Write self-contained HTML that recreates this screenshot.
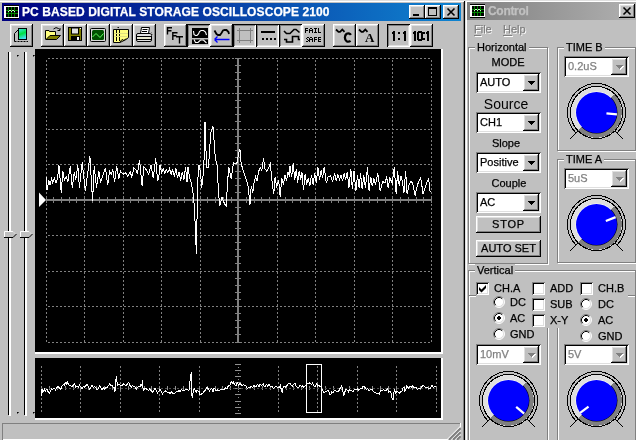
<!DOCTYPE html><html><head><meta charset="utf-8"><style>
*{box-sizing:border-box}
html,body{margin:0;padding:0}
body{width:636px;height:440px;overflow:hidden;position:relative;background:#c0c0c0;font-family:"Liberation Sans",sans-serif;font-size:11px;color:#000}
.a{position:absolute}
.rz{background:#c0c0c0;box-shadow:inset -1px -1px #000,inset 1px 1px #fff,inset -2px -2px #808080,inset 2px 2px #dfdfdf}
.pr{background:#c0c0c0;box-shadow:inset 1px 1px #000,inset -1px -1px #fff,inset 2px 2px #808080,inset -2px -2px #dfdfdf}
.pk{background-color:#dfdfdf;background-image:linear-gradient(45deg,#c0c0c0 25%,transparent 25%,transparent 75%,#c0c0c0 75%),linear-gradient(45deg,#c0c0c0 25%,transparent 25%,transparent 75%,#c0c0c0 75%);background-size:2px 2px;background-position:0 0,1px 1px;box-shadow:inset 1px 1px #000,inset -1px -1px #fff,inset 2px 2px #808080,inset -2px -2px #dfdfdf}
.sk{background:#fff;box-shadow:inset 1px 1px #808080,inset -1px -1px #fff,inset 2px 2px #000,inset -2px -2px #dfdfdf}
.et{border:1px solid #808080;box-shadow:inset 1px 1px #fff,1px 1px #fff}
.gl{position:absolute;background:#c0c0c0;padding:0 2px;line-height:12px;white-space:nowrap;will-change:transform;-webkit-text-stroke:0.25px #000}
.t{position:absolute;white-space:nowrap;line-height:1;will-change:transform;-webkit-text-stroke:0.25px currentColor}
svg{position:absolute;overflow:visible}

</style></head><body>
<div class="a" style="left:0;top:0;width:465px;height:440px;background:#c0c0c0;box-shadow:inset 0 1px #dfdfdf,inset -1px 0 #000,inset 0 2px #fff,inset -2px 0 #808080"></div>
<div class="a" style="left:2px;top:3px;width:459px;height:18px;background:linear-gradient(to right,#000080,#1084d0)"></div>
<svg style="left:4px;top:5px" width="15" height="14" viewBox="0 -1 15 14" shape-rendering="crispEdges"><rect x="0" y="-1" width="15" height="14" fill="#000"/><rect x="0" y="0" width="15" height="12" fill="#fff"/><rect x="2" y="1" width="12" height="10" fill="#000"/><rect x="4" y="1" width="1" height="10" fill="#008000"/><rect x="7" y="1" width="1" height="10" fill="#008000"/><rect x="10" y="1" width="1" height="10" fill="#008000"/><rect x="2" y="4" width="12" height="1" fill="#008000"/><rect x="2" y="7" width="12" height="1" fill="#008000"/><rect x="4" y="5" width="1" height="1" fill="#c0ffc0"/><rect x="7" y="5" width="1" height="1" fill="#c0ffc0"/><rect x="10" y="5" width="1" height="1" fill="#c0ffc0"/><rect x="5" y="4" width="1" height="1" fill="#c0ffc0"/><rect x="6" y="4" width="1" height="1" fill="#c0ffc0"/><rect x="8" y="4" width="1" height="1" fill="#c0ffc0"/><rect x="9" y="4" width="1" height="1" fill="#c0ffc0"/></svg>
<div class="t" style="left:22px;top:6px;font-weight:bold;font-size:12px;color:#fff;letter-spacing:0.1px">PC BASED DIGITAL STORAGE OSCILLOSCOPE 2100</div>
<div class="a rz" style="left:409px;top:5px;width:16px;height:14px"></div><div class="a" style="left:413px;top:14px;width:6px;height:2px;background:#000"></div>
<div class="a rz" style="left:425px;top:5px;width:16px;height:14px"></div><div class="a" style="left:428px;top:7px;width:9px;height:9px;border:1px solid #000;border-top-width:2px"></div>
<div class="a rz" style="left:443px;top:5px;width:16px;height:14px"></div><svg style="left:443px;top:5px" width="16" height="14" viewBox="0 0 16 14"><path d="M4.5 3.5 L11.5 10.5 M11.5 3.5 L4.5 10.5" stroke="#000" stroke-width="1.6"/></svg>
<div class="a rz" style="left:10px;top:24px;width:23px;height:23px"></div>
<svg style="left:10px;top:24px" width="23" height="23" viewBox="0 0 23 23"><defs><linearGradient id="g1" x1="0" y1="0" x2="0.3" y2="1"><stop offset="0" stop-color="#40e8f0"/><stop offset="0.55" stop-color="#00e040"/><stop offset="1" stop-color="#40e0f0"/></linearGradient></defs><rect x="8.5" y="4.5" width="8" height="11" fill="url(#g1)" stroke="#000"/><path d="M4.5 17.5 V9.5 L8.5 5.5" stroke="#000" fill="none"/><path d="M4.5 17.5 H18" stroke="#000" stroke-dasharray="2 1" fill="none"/></svg>
<div class="a rz" style="left:41px;top:24px;width:23px;height:23px"></div>
<svg style="left:41px;top:24px" width="23" height="23" viewBox="0 0 23 23"><path d="M4.5 15.5 V6.5 H8 L8.5 7.5 H14.5 V11.5" fill="#ffff80" stroke="#000"/><path d="M5 15.5 L9 11.5 H19.5 L15.5 15.5 Z" fill="#808000" stroke="#000"/><path d="M12.5 5 Q15 2.5 17.5 4.5 L18.5 5.5" stroke="#000" fill="none"/><path d="M16.5 6.5 H19 V4" stroke="#000" fill="none"/></svg>
<div class="a rz" style="left:64px;top:24px;width:23px;height:23px"></div>
<svg style="left:64px;top:24px" width="23" height="23" viewBox="0 0 23 23"><rect x="4.5" y="3.5" width="13" height="13" fill="#808000" stroke="#000"/><rect x="7.5" y="4" width="7" height="6" fill="#e0e0e0" stroke="#000"/><rect x="7" y="12" width="9" height="5" fill="#000"/><rect x="13" y="13" width="2" height="3" fill="#fff"/><rect x="16" y="4" width="1" height="1" fill="#fff"/></svg>
<div class="a rz" style="left:87px;top:24px;width:23px;height:23px"></div>
<svg style="left:87px;top:24px" width="23" height="23" viewBox="0 0 23 23"><rect x="3.5" y="4.5" width="15" height="13" rx="1" fill="#d8d8d8" stroke="#000"/><rect x="5" y="6" width="12" height="10" rx="1.5" fill="#005000"/><path d="M5.5 13 L9 9.5 L13 13.5 L16.5 9.5" stroke="#60ff60" fill="none"/></svg>
<div class="a rz" style="left:110px;top:24px;width:23px;height:23px"></div>
<svg style="left:110px;top:24px" width="23" height="23" viewBox="0 0 23 23"><path d="M3.5 5.5 H18.5 V13.5 L16 15.5 L13 17 L10 18.5 H3.5 Z" fill="#ffff80" stroke="#000"/><path d="M6.5 5 V17 M9.5 5 V17" stroke="#000" stroke-width="1"/><path d="M4 9.5 H18 M4 12.5 H17" stroke="#e0e080" stroke-width="1"/><path d="M7.5 4 Q8 2.5 9 4" stroke="#000" fill="none"/><path d="M10 18 L12 15.5 L14 16.5 L16 14.5" stroke="#000" fill="none"/></svg>
<div class="a rz" style="left:133px;top:24px;width:23px;height:23px"></div>
<svg style="left:133px;top:24px" width="23" height="23" viewBox="0 0 23 23"><path d="M7.5 9.5 L8.5 3.5 H16.5 L15.5 9.5 Z" fill="#fff" stroke="#000"/><path d="M9.5 5.5 H14.5 M9 7.5 H14" stroke="#000"/><rect x="3.5" y="9.5" width="15" height="8" rx="1.5" fill="#e0e0e0" stroke="#000"/><path d="M4 12.5 H18 M4 15.5 H18" stroke="#000"/><path d="M5 14 H17" stroke="#f0f0c0"/><path d="M17 10 L19 8 M18 12 L20 10" stroke="#606060" stroke-dasharray="1 1"/></svg>
<div class="a rz" style="left:164px;top:24px;width:23px;height:23px"></div>
<svg style="left:164px;top:24px" width="23" height="23" viewBox="0 0 23 23"><path d="M3.5 3 V10.5 M3 3.8 H8 M3 6.8 H7.5 M8.8 8 V16 M8.3 8.8 H13.5 M8.3 11.8 H12.5 M12 12.8 H19 M15.5 12.5 V19.5" stroke="#000" stroke-width="1.4" fill="none"/></svg>
<div class="a pr" style="left:187px;top:24px;width:23px;height:23px"></div>
<svg style="left:187px;top:24px" width="23" height="23" viewBox="0 0 23 23"><rect x="5" y="4" width="16" height="16" fill="#000"/><rect x="5" y="14" width="16" height="1.5" fill="#c0c0c0"/><path d="M6.5 7 L7 10.5 L8.5 11.5 H10 L11.5 10 L12.5 7.5 L14 6.5 H16.5 L18.5 8 L19.5 11" stroke="#fff" fill="none" stroke-width="1.1"/><path d="M7 15.5 L8.5 18.5 H11 L13.5 16 H16.5 L19.5 19" stroke="#fff" fill="none" stroke-width="1.1"/></svg>
<div class="a rz" style="left:210px;top:24px;width:23px;height:23px"></div>
<svg style="left:210px;top:24px" width="23" height="23" viewBox="0 0 23 23"><path d="M4.5 6.5 L6.5 10 L8 11 H10 L11.5 9 L13 6.5 L14.5 6 H16.5 L18.5 8 L19 10" stroke="#000" stroke-width="1.8" fill="none"/><path d="M4.5 15.5 H19.5 M4.5 15.5 L7.5 12.5 M4.5 15.5 L7.5 18.5" stroke="#0000ff" stroke-width="1.3" fill="none"/></svg>
<div class="a pr" style="left:233px;top:24px;width:23px;height:23px"></div>
<svg style="left:233px;top:24px" width="23" height="23" viewBox="0 0 23 23"><path d="M6.5 4 V19 M17.5 4 V19 M4 6.5 H20 M4 16.5 H20" stroke="#808080" stroke-width="1"/></svg>
<div class="a pr" style="left:256px;top:24px;width:23px;height:23px"></div>
<svg style="left:256px;top:24px" width="23" height="23" viewBox="0 0 23 23"><rect x="5" y="7" width="14" height="2" fill="#000"/><rect x="6" y="14" width="2" height="2" fill="#000"/><rect x="10" y="14" width="2" height="2" fill="#000"/><rect x="14" y="14" width="2" height="2" fill="#000"/><rect x="18" y="14" width="2" height="2" fill="#000"/></svg>
<div class="a pr" style="left:279px;top:24px;width:23px;height:23px"></div>
<svg style="left:279px;top:24px" width="23" height="23" viewBox="0 0 23 23"><path d="M5 7 L7.5 9.5 H11 L15 5.5 H17 L20.5 8.5" stroke="#000" stroke-width="1.6" fill="none"/><path d="M5 15.5 H7.5 V18 H13.5 V12.5 H19.5 V15.5 H21" stroke="#000" stroke-width="1.6" fill="none"/></svg>
<div class="a rz" style="left:302px;top:24px;width:23px;height:23px"></div>
<svg style="left:0px;top:0px" width="636" height="50" viewBox="0 0 636 50" shape-rendering="crispEdges"><g fill="#000"><rect x="305" y="28" width="1" height="1"/><rect x="306" y="28" width="1" height="1"/><rect x="307" y="28" width="1" height="1"/><rect x="305" y="29" width="1" height="1"/><rect x="305" y="30" width="1" height="1"/><rect x="306" y="30" width="1" height="1"/><rect x="307" y="30" width="1" height="1"/><rect x="305" y="31" width="1" height="1"/><rect x="305" y="32" width="1" height="1"/><rect x="310" y="28" width="1" height="1"/><rect x="311" y="28" width="1" height="1"/><rect x="309" y="29" width="1" height="1"/><rect x="312" y="29" width="1" height="1"/><rect x="309" y="30" width="1" height="1"/><rect x="310" y="30" width="1" height="1"/><rect x="311" y="30" width="1" height="1"/><rect x="312" y="30" width="1" height="1"/><rect x="309" y="31" width="1" height="1"/><rect x="312" y="31" width="1" height="1"/><rect x="309" y="32" width="1" height="1"/><rect x="312" y="32" width="1" height="1"/><rect x="314" y="28" width="1" height="1"/><rect x="315" y="28" width="1" height="1"/><rect x="316" y="28" width="1" height="1"/><rect x="315" y="29" width="1" height="1"/><rect x="315" y="30" width="1" height="1"/><rect x="315" y="31" width="1" height="1"/><rect x="314" y="32" width="1" height="1"/><rect x="315" y="32" width="1" height="1"/><rect x="316" y="32" width="1" height="1"/><rect x="318" y="28" width="1" height="1"/><rect x="318" y="29" width="1" height="1"/><rect x="318" y="30" width="1" height="1"/><rect x="318" y="31" width="1" height="1"/><rect x="318" y="32" width="1" height="1"/><rect x="319" y="32" width="1" height="1"/><rect x="320" y="32" width="1" height="1"/><rect x="307" y="37" width="1" height="1"/><rect x="308" y="37" width="1" height="1"/><rect x="306" y="38" width="1" height="1"/><rect x="307" y="39" width="1" height="1"/><rect x="308" y="40" width="1" height="1"/><rect x="306" y="41" width="1" height="1"/><rect x="307" y="41" width="1" height="1"/><rect x="310" y="37" width="1" height="1"/><rect x="311" y="37" width="1" height="1"/><rect x="309" y="38" width="1" height="1"/><rect x="312" y="38" width="1" height="1"/><rect x="309" y="39" width="1" height="1"/><rect x="310" y="39" width="1" height="1"/><rect x="311" y="39" width="1" height="1"/><rect x="312" y="39" width="1" height="1"/><rect x="309" y="40" width="1" height="1"/><rect x="312" y="40" width="1" height="1"/><rect x="309" y="41" width="1" height="1"/><rect x="312" y="41" width="1" height="1"/><rect x="314" y="37" width="1" height="1"/><rect x="315" y="37" width="1" height="1"/><rect x="316" y="37" width="1" height="1"/><rect x="314" y="38" width="1" height="1"/><rect x="314" y="39" width="1" height="1"/><rect x="315" y="39" width="1" height="1"/><rect x="316" y="39" width="1" height="1"/><rect x="314" y="40" width="1" height="1"/><rect x="314" y="41" width="1" height="1"/><rect x="318" y="37" width="1" height="1"/><rect x="319" y="37" width="1" height="1"/><rect x="320" y="37" width="1" height="1"/><rect x="318" y="38" width="1" height="1"/><rect x="318" y="39" width="1" height="1"/><rect x="319" y="39" width="1" height="1"/><rect x="320" y="39" width="1" height="1"/><rect x="318" y="40" width="1" height="1"/><rect x="318" y="41" width="1" height="1"/><rect x="319" y="41" width="1" height="1"/><rect x="320" y="41" width="1" height="1"/></g></svg>
<div class="a rz" style="left:333px;top:24px;width:23px;height:23px"></div>
<svg style="left:0px;top:0px" width="636" height="50" viewBox="0 0 636 50"><path d="M336 29.5 L338.5 31.8 L340 31.8 L342.3 29.5 L344.5 31.8" stroke="#000" stroke-width="1.8" fill="none"/><path d="M350.8 35 L350.3 34.2 Q348.5 32.8 346.6 33.8 Q344.9 35 344.9 37.6 Q344.9 40.3 346.6 41.3 Q348.6 42.3 350.6 40.8" stroke="#000" stroke-width="2.3" fill="none"/></svg>
<div class="a rz" style="left:356px;top:24px;width:23px;height:23px"></div>
<svg style="left:0px;top:0px" width="636" height="50" viewBox="0 0 636 50"><path d="M359 29.5 L361.5 31.8 L363 31.8 L365.3 29.5 L367.5 31.8" stroke="#000" stroke-width="1.8" fill="none"/><text x="365" y="41.8" font-family="Liberation Serif" font-weight="bold" font-size="13" fill="#000">A</text></svg>
<div class="a pr" style="left:387px;top:24px;width:23px;height:23px"></div>
<svg style="left:0px;top:0px" width="636" height="50" viewBox="0 0 636 50" shape-rendering="crispEdges"><g fill="#000"><rect x="392" y="32" width="1" height="2"/><rect x="393" y="31" width="2" height="10"/><rect x="398" y="32" width="2" height="2"/><rect x="398" y="38" width="2" height="2"/><rect x="403" y="32" width="1" height="2"/><rect x="404" y="31" width="2" height="10"/></g></svg>
<div class="a rz" style="left:410px;top:24px;width:23px;height:23px"></div>
<svg style="left:0px;top:0px" width="636" height="50" viewBox="0 0 636 50" shape-rendering="crispEdges"><g fill="#000"><rect x="413" y="32" width="1" height="2"/><rect x="414" y="31" width="2" height="10"/><path d="M417 32 h1 v-1 h4 v1 h1 v8 h-1 v1 h-4 v-1 h-1 Z M419 33 v6 h2 v-6 Z" fill-rule="evenodd"/><rect x="423" y="32" width="2" height="2"/><rect x="423" y="38" width="2" height="2"/><rect x="426" y="32" width="1" height="2"/><rect x="427" y="31" width="2" height="10"/></g></svg>
<div class="a" style="left:8px;top:52px;width:1px;height:363px;background:#000"></div>
<div class="a" style="left:9px;top:52px;width:2px;height:364px;background:#fff"></div>
<svg style="left:4px;top:230px" width="14" height="9" viewBox="0 0 14 9"><path d="M0 1 H9 L12 4 L9 7 H0 Z" fill="#c0c0c0"/><path d="M0.5 7 V1.5 H9" stroke="#fff" fill="none"/><path d="M9 1.5 L11.5 4" stroke="#dfdfdf" fill="none"/><path d="M0 7.5 H9 L12.5 4" stroke="#000" fill="none"/></svg>
<div class="a" style="left:24px;top:52px;width:1px;height:363px;background:#000"></div>
<div class="a" style="left:25px;top:52px;width:2px;height:364px;background:#fff"></div>
<svg style="left:20px;top:230px" width="14" height="9" viewBox="0 0 14 9"><path d="M0 1 H9 L12 4 L9 7 H0 Z" fill="#c0c0c0"/><path d="M0.5 7 V1.5 H9" stroke="#fff" fill="none"/><path d="M9 1.5 L11.5 4" stroke="#dfdfdf" fill="none"/><path d="M0 7.5 H9 L12.5 4" stroke="#000" fill="none"/></svg>
<div class="a" style="left:17px;top:55px;width:1px;height:1px;background:#000;box-shadow:1px 0 #404040,0 1px #606060"></div>
<div class="a" style="left:17px;top:412px;width:1px;height:1px;background:#000;box-shadow:1px 0 #404040,0 1px #606060"></div>
<div class="a" style="left:33px;top:55px;width:1px;height:1px;background:#000;box-shadow:1px 0 #404040,0 1px #606060"></div>
<div class="a" style="left:33px;top:412px;width:1px;height:1px;background:#000;box-shadow:1px 0 #404040,0 1px #606060"></div>
<svg style="left:0;top:0" width="636" height="440" viewBox="0 0 636 440"><rect x="35" y="49" width="406" height="303" fill="#000"/><rect x="441" y="49" width="2" height="305" fill="#fff"/><rect x="35" y="352" width="408" height="2" fill="#fff"/><rect x="35" y="358" width="406" height="60" fill="#000"/><rect x="441" y="358" width="2" height="62" fill="#fff"/><rect x="35" y="418" width="408" height="2" fill="#fff"/><path d="M46.5 60 V343 M84.5 60 V343 M123.5 60 V343 M161.5 60 V343 M200.5 60 V343 M277.5 60 V343 M315.5 60 V343 M354.5 60 V343 M392.5 60 V343 M431.5 60 V343 M48 58.5 H432 M48 93.5 H432 M48 129.5 H432 M48 164.5 H432 M48 235.5 H432 M48 271.5 H432 M48 306.5 H432 M48 342.5 H432" stroke="#808080" stroke-width="1" stroke-dasharray="2 2" fill="none" shape-rendering="crispEdges"/><path d="M46 199 H432 V201 H46 Z M237 58 H239 V343 H237 Z M46 197 h1 v6 h-1 Z M53 197 h1 v6 h-1 Z M61 197 h1 v6 h-1 Z M69 197 h1 v6 h-1 Z M76 197 h1 v6 h-1 Z M84 197 h1 v6 h-1 Z M92 197 h1 v6 h-1 Z M99 197 h1 v6 h-1 Z M107 197 h1 v6 h-1 Z M115 197 h1 v6 h-1 Z M123 197 h1 v6 h-1 Z M130 197 h1 v6 h-1 Z M138 197 h1 v6 h-1 Z M146 197 h1 v6 h-1 Z M153 197 h1 v6 h-1 Z M161 197 h1 v6 h-1 Z M169 197 h1 v6 h-1 Z M177 197 h1 v6 h-1 Z M184 197 h1 v6 h-1 Z M192 197 h1 v6 h-1 Z M200 197 h1 v6 h-1 Z M207 197 h1 v6 h-1 Z M215 197 h1 v6 h-1 Z M223 197 h1 v6 h-1 Z M231 197 h1 v6 h-1 Z M238 197 h1 v6 h-1 Z M246 197 h1 v6 h-1 Z M254 197 h1 v6 h-1 Z M261 197 h1 v6 h-1 Z M269 197 h1 v6 h-1 Z M277 197 h1 v6 h-1 Z M285 197 h1 v6 h-1 Z M292 197 h1 v6 h-1 Z M300 197 h1 v6 h-1 Z M308 197 h1 v6 h-1 Z M315 197 h1 v6 h-1 Z M323 197 h1 v6 h-1 Z M331 197 h1 v6 h-1 Z M338 197 h1 v6 h-1 Z M346 197 h1 v6 h-1 Z M354 197 h1 v6 h-1 Z M362 197 h1 v6 h-1 Z M369 197 h1 v6 h-1 Z M377 197 h1 v6 h-1 Z M385 197 h1 v6 h-1 Z M392 197 h1 v6 h-1 Z M400 197 h1 v6 h-1 Z M408 197 h1 v6 h-1 Z M416 197 h1 v6 h-1 Z M423 197 h1 v6 h-1 Z M431 197 h1 v6 h-1 Z M235 58 h6 v1 h-6 Z M235 65 h6 v1 h-6 Z M235 72 h6 v1 h-6 Z M235 79 h6 v1 h-6 Z M235 86 h6 v1 h-6 Z M235 93 h6 v1 h-6 Z M235 100 h6 v1 h-6 Z M235 107 h6 v1 h-6 Z M235 114 h6 v1 h-6 Z M235 121 h6 v1 h-6 Z M235 129 h6 v1 h-6 Z M235 136 h6 v1 h-6 Z M235 143 h6 v1 h-6 Z M235 150 h6 v1 h-6 Z M235 157 h6 v1 h-6 Z M235 164 h6 v1 h-6 Z M235 171 h6 v1 h-6 Z M235 178 h6 v1 h-6 Z M235 185 h6 v1 h-6 Z M235 192 h6 v1 h-6 Z M235 200 h6 v1 h-6 Z M235 207 h6 v1 h-6 Z M235 214 h6 v1 h-6 Z M235 221 h6 v1 h-6 Z M235 228 h6 v1 h-6 Z M235 235 h6 v1 h-6 Z M235 242 h6 v1 h-6 Z M235 249 h6 v1 h-6 Z M235 256 h6 v1 h-6 Z M235 263 h6 v1 h-6 Z M235 271 h6 v1 h-6 Z M235 278 h6 v1 h-6 Z M235 285 h6 v1 h-6 Z M235 292 h6 v1 h-6 Z M235 299 h6 v1 h-6 Z M235 306 h6 v1 h-6 Z M235 313 h6 v1 h-6 Z M235 320 h6 v1 h-6 Z M235 327 h6 v1 h-6 Z M235 334 h6 v1 h-6 Z M235 342 h6 v1 h-6 Z" fill="#808080" shape-rendering="crispEdges"/><path d="M39 192.5 L46 200 L39 207 Z" fill="#fff"/><polyline points="46.4,177.4 47.0,190.0 48.8,180.6 50.0,184.6 51.6,179.0 52.8,183.0 54.3,178.0 56.0,183.0 57.5,179.0 59.0,165.5 61.2,192.5 62.8,171.0 64.4,179.8 66.3,176.6 67.9,181.4 70.3,166.3 72.3,187.8 74.3,171.8 75.8,179.8 77.8,165.5 79.4,187.8 82.2,162.3 85.4,191.0 89.9,156.0 92.6,201.3 94.2,166.3 96.5,187.8 98.9,171.0 100.5,183.0 102.4,176.6 105.6,167.9 107.6,185.4 109.6,171.0 111.5,174.2 112.7,168.7 114.6,182.2 116.7,166.3 118.8,179.0 120.4,171.0 123.1,174.2 125.5,172.6 127.9,176.6 130.3,171.8 131.8,177.4 133.8,167.9 135.8,169.5 137.4,174.2 139.5,159.9 142.2,186.2 143.8,167.0 146.2,169.5 148.6,174.2 151.0,165.5 153.3,178.2 155.7,158.3 157.6,181.4 159.2,174.2 160.0,165.5 161.6,172.6 163.2,168.7 164.8,173.4 166.4,169.5 167.9,172.6 169.5,168.7 171.1,174.2 172.7,169.5 174.3,176.6 175.9,167.9 177.5,178.2 179.1,171.8 180.7,180.6 182.3,171.8 183.9,179.8 185.5,167.1 187.0,182.2 188.0,167.3 189.8,178.6 191.4,183.2 193.7,196.8 195.5,230.0 196.3,253.5 197.1,215.0 197.6,183.2 198.9,165.0 200.5,171.8 201.6,187.7 202.8,178.6 203.9,165.0 205.0,121.8 206.6,167.3 208.5,167.3 210.7,133.2 213.0,126.4 215.3,158.2 217.0,165.0 218.7,194.5 219.8,205.9 222.0,196.8 224.4,203.6 226.2,205.9 227.8,178.6 228.9,167.3 231.2,178.6 233.5,162.7 235.7,163.9 237.2,162.3 238.8,152.7 240.0,149.6 241.2,163.9 243.6,171.8 245.9,178.2 248.0,186.2 249.1,195.7 249.9,205.3 251.2,186.2 252.8,192.5 253.9,183.0 255.5,176.6 257.1,181.4 258.7,171.0 260.3,167.9 261.9,170.3 263.5,158.3 265.0,168.7 266.6,171.0 268.2,168.7 270.3,163.9 272.2,183.0 273.8,194.1 275.1,176.6 276.7,187.8 278.6,179.8 280.2,196.5 281.8,178.2 283.4,184.6 285.0,175.0 286.5,181.4 288.1,171.8 289.7,176.6 290.0,166.3 291.6,177.4 293.2,163.1 294.8,179.8 296.4,168.7 297.6,183.0 299.2,171.0 300.8,179.8 301.9,171.8 303.5,190.2 305.1,174.2 306.7,184.6 308.3,178.2 309.9,186.2 311.5,175.0 313.1,184.6 314.7,173.4 316.3,183.0 317.9,167.1 319.5,179.8 321.1,170.3 322.6,178.2 324.2,167.1 326.3,183.0 328.2,176.6 330.6,175.8 332.7,181.4 334.6,173.4 336.2,181.4 337.8,174.2 339.4,179.8 341.0,175.0 342.5,181.4 344.1,173.4 345.7,179.8 347.3,171.8 348.9,187.8 350.8,168.7 352.4,189.4 354.0,171.0 355.9,191.0 357.5,175.0 359.1,187.8 360.6,173.4 362.2,189.4 363.8,175.0 365.4,187.8 367.5,167.1 369.1,191.0 370.7,176.6 372.3,186.2 373.9,178.2 375.5,184.6 377.8,173.4 380.2,191.0 382.6,181.4 385.0,183.0 386.6,176.6 388.2,187.8 389.8,178.2 392.2,183.0 394.2,167.1 396.2,194.1 397.6,171.0 399.2,186.2 400.8,175.8 402.4,181.4 404.0,192.5 405.6,171.0 407.1,194.1 409.1,184.6 411.1,181.4 412.7,183.0 415.1,195.7 417.5,184.6 420.7,177.4 423.1,194.1 425.5,186.2 428.6,178.2 430.2,192.5" stroke="#fff" stroke-width="1" fill="none" stroke-linejoin="miter" shape-rendering="crispEdges"/><path d="M41.5 366 V412 M80.5 366 V412 M120.5 366 V412 M159.5 366 V412 M199.5 366 V412 M278.5 366 V412 M317.5 366 V412 M357.5 366 V412 M396.5 366 V412 M436.5 366 V412" stroke="#808080" stroke-width="1" stroke-dasharray="2 2" fill="none" shape-rendering="crispEdges"/><path d="M235 364 h6 v1 h-6 Z M238 367 h1 v1 h-1 Z M235 370 h6 v1 h-6 Z M238 373 h1 v1 h-1 Z M235 376 h6 v1 h-6 Z M238 379 h1 v1 h-1 Z M235 382 h6 v1 h-6 Z M238 385 h1 v1 h-1 Z M235 388 h6 v1 h-6 Z M238 391 h1 v1 h-1 Z M235 394 h6 v1 h-6 Z M238 397 h1 v1 h-1 Z M235 401 h6 v1 h-6 Z M238 404 h1 v1 h-1 Z M235 407 h6 v1 h-6 Z M238 410 h1 v1 h-1 Z M235 413 h6 v1 h-6 Z M41 386 h1 v4 h-1 Z M49 386 h1 v4 h-1 Z M57 386 h1 v4 h-1 Z M65 386 h1 v4 h-1 Z M73 386 h1 v4 h-1 Z M80 386 h1 v4 h-1 Z M88 386 h1 v4 h-1 Z M96 386 h1 v4 h-1 Z M104 386 h1 v4 h-1 Z M112 386 h1 v4 h-1 Z M120 386 h1 v4 h-1 Z M128 386 h1 v4 h-1 Z M136 386 h1 v4 h-1 Z M144 386 h1 v4 h-1 Z M151 386 h1 v4 h-1 Z M159 386 h1 v4 h-1 Z M167 386 h1 v4 h-1 Z M175 386 h1 v4 h-1 Z M183 386 h1 v4 h-1 Z M191 386 h1 v4 h-1 Z M199 386 h1 v4 h-1 Z M207 386 h1 v4 h-1 Z M215 386 h1 v4 h-1 Z M222 386 h1 v4 h-1 Z M230 386 h1 v4 h-1 Z M238 386 h1 v4 h-1 Z M246 386 h1 v4 h-1 Z M254 386 h1 v4 h-1 Z M262 386 h1 v4 h-1 Z M270 386 h1 v4 h-1 Z M278 386 h1 v4 h-1 Z M286 386 h1 v4 h-1 Z M293 386 h1 v4 h-1 Z M301 386 h1 v4 h-1 Z M309 386 h1 v4 h-1 Z M317 386 h1 v4 h-1 Z M325 386 h1 v4 h-1 Z M333 386 h1 v4 h-1 Z M341 386 h1 v4 h-1 Z M349 386 h1 v4 h-1 Z M357 386 h1 v4 h-1 Z M364 386 h1 v4 h-1 Z M372 386 h1 v4 h-1 Z M380 386 h1 v4 h-1 Z M388 386 h1 v4 h-1 Z M396 386 h1 v4 h-1 Z M404 386 h1 v4 h-1 Z M412 386 h1 v4 h-1 Z M420 386 h1 v4 h-1 Z M428 386 h1 v4 h-1 Z M436 386 h1 v4 h-1 Z" fill="#909090" shape-rendering="crispEdges"/><path d="M41 388.5 H437" stroke="#505050" stroke-dasharray="2 2" shape-rendering="crispEdges"/><polyline points="41.1,388.9 41.5,392.4 41.8,395.8 42.1,391.4 42.5,389.0 43.1,391.2 43.7,391.4 44.6,389.1 45.5,390.8 46.8,389.1 48.0,391.4 49.3,393.4 50.6,391.4 51.5,388.4 52.5,389.5 53.5,388.9 54.4,388.3 55.6,390.0 56.9,387.6 58.1,386.0 59.4,388.3 60.6,389.4 61.9,386.4 63.2,384.8 64.4,385.1 65.3,382.5 66.3,383.9 67.2,381.9 68.2,383.9 69.5,385.9 70.7,385.8 72.0,386.5 73.2,385.1 74.5,384.1 75.7,387.0 77.0,386.3 78.3,387.6 79.5,385.3 80.8,387.0 82.0,388.7 83.3,386.4 84.5,387.1 85.8,385.8 87.0,384.1 88.3,386.4 89.5,389.0 90.8,387.6 92.0,385.5 93.3,387.4 94.6,386.5 95.9,387.6 97.2,390.0 98.4,388.3 99.7,386.1 100.9,388.0 102.2,389.8 103.4,387.6 104.7,389.3 105.9,387.0 107.2,387.4 108.4,385.8 109.7,383.8 111.0,385.8 112.2,385.7 113.5,387.6 114.2,387.5 115.0,391.4 115.6,385.5 116.2,375.7 116.8,379.4 117.3,385.1 118.5,384.8 119.8,384.5 121.0,385.8 122.3,385.1 123.5,383.8 124.8,384.5 126.0,386.2 127.3,383.9 128.6,382.5 129.8,385.1 131.1,387.5 132.4,385.8 133.7,386.4 134.9,387.0 136.2,389.3 137.4,387.6 138.7,386.3 139.9,387.0 140.9,384.1 141.8,385.1 142.1,384.6 142.4,380.1 142.9,387.1 143.4,390.2 144.8,388.5 146.2,388.9 147.4,389.5 148.7,390.2 149.9,388.5 151.2,390.8 152.4,392.5 153.7,390.2 154.9,388.2 156.2,390.2 157.5,392.8 158.8,391.4 160.1,389.4 161.3,391.4 162.6,393.7 163.8,392.0 165.1,390.7 166.3,391.4 167.6,392.7 168.8,392.0 170.1,393.7 171.3,391.4 172.6,393.6 173.9,393.9 175.2,392.6 176.4,391.4 177.7,391.8 178.9,390.2 180.2,391.9 181.4,389.5 182.7,390.9 183.9,390.2 185.2,389.9 186.4,389.5 187.7,389.9 189.0,390.2 190.1,380.4 191.2,372.5 191.6,384.1 192.1,397.7 193.1,392.6 194.0,389.5 194.7,388.4 195.3,391.2 196.2,392.6 197.2,390.0 198.1,390.9 199.1,391.8 200.1,394.8 201.0,393.7 201.9,394.4 202.9,393.0 203.9,391.8 204.8,390.5 205.8,389.9 206.7,387.4 207.6,388.0 208.6,388.6 209.6,391.0 210.5,389.3 211.8,388.6 213.1,391.8 214.1,388.2 215.0,388.6 216.1,391.1 217.2,389.5 218.3,391.0 219.4,390.5 220.7,389.2 222.0,389.9 223.2,389.6 224.5,389.3 225.4,388.0 226.4,388.6 227.4,388.0 228.4,385.4 229.4,385.8 230.3,384.2 231.2,381.9 232.2,383.5 233.4,382.1 234.7,384.8 236.0,385.9 237.3,382.9 238.6,385.2 239.8,383.5 240.8,384.4 241.7,385.4 242.6,385.1 243.6,384.8 244.9,385.5 246.2,386.1 247.4,388.8 248.7,387.4 250.0,387.8 251.3,386.1 252.6,387.8 253.8,385.4 255.1,386.8 256.3,386.1 257.6,384.4 258.9,386.7 260.1,384.0 261.4,385.4 262.4,384.8 263.3,384.2 264.2,386.4 265.2,386.7 266.5,384.4 267.8,386.1 268.9,384.1 270.0,386.1 271.0,386.1 272.0,386.1 273.3,388.3 274.5,387.5 275.8,386.7 277.1,387.0 278.4,387.4 279.4,387.4 280.3,385.4 281.2,389.2 282.2,393.1 283.1,387.6 284.1,386.1 285.1,387.3 286.2,386.5 287.4,385.0 288.5,383.5 289.8,383.1 291.1,384.8 292.4,386.5 293.6,384.2 294.9,383.1 296.2,386.1 297.4,387.8 298.7,387.4 300.0,384.8 301.3,386.1 302.6,385.8 303.8,387.4 305.1,386.1 306.4,384.8 307.6,383.1 308.9,383.5 309.9,382.8 310.8,384.0 311.8,384.1 312.7,382.3 313.4,385.2 314.0,386.1 314.9,386.8 315.9,385.4 316.9,383.8 317.8,386.1 318.9,385.1 319.9,387.1 321.0,386.1 321.9,389.3 322.9,390.5 324.1,393.1 325.4,391.8 326.7,391.1 328.0,390.5 328.9,391.4 329.9,394.4 330.9,394.1 331.8,391.8 333.1,393.1 334.3,390.5 335.6,390.9 336.9,391.2 338.1,391.5 339.4,389.9 340.5,387.6 341.7,385.4 342.8,391.5 343.9,395.6 344.9,391.8 345.8,389.9 347.1,389.9 348.3,391.8 349.1,389.4 350.0,391.0 351.5,390.4 353.0,391.8 354.4,389.6 355.9,389.5 357.4,388.9 358.9,390.3 360.4,388.6 361.8,388.8 363.3,386.1 364.8,387.3 366.2,389.1 367.7,388.8 369.2,391.1 370.7,389.5 372.1,389.6 373.6,391.8 375.1,392.5 376.6,393.2 378.1,393.6 379.5,394.0 380.6,390.5 381.8,391.0 383.2,389.6 384.7,390.3 386.2,390.6 387.7,388.8 388.8,391.9 389.9,391.0 390.6,392.5 391.4,394.0 392.2,398.9 393.1,399.9 393.7,396.4 394.3,388.8 395.1,391.0 395.8,393.2 396.9,391.5 398.0,391.8 399.5,393.4 401.0,391.0 402.1,391.1 403.2,387.3 404.0,387.1 404.9,391.0 405.9,389.4 406.9,385.8 408.4,388.2 409.8,386.6 411.3,387.2 412.8,385.8 414.2,387.6 415.7,387.3 417.2,389.1 418.7,388.8 420.1,389.1 421.6,387.3 423.1,385.0 424.6,386.6 426.1,388.0 427.5,387.3 429.0,388.6 430.5,388.0 432.0,385.6 433.5,387.3 434.9,386.0 436.4,386.6" stroke="#fff" stroke-width="1" fill="none" shape-rendering="crispEdges"/><rect x="306.5" y="364.5" width="15" height="48" stroke="#fff" fill="none"/></svg>
<div class="a" style="left:2px;top:423px;width:458px;height:1px;background:#808080"></div>
<div class="a" style="left:2px;top:423px;width:1px;height:17px;background:#808080"></div>
<div class="a" style="left:3px;top:439px;width:445px;height:1px;background:#fff"></div>
<div class="a" style="left:460px;top:423px;width:1px;height:4px;background:#fff"></div>
<svg style="left:446px;top:424px" width="16" height="16" viewBox="0 0 16 16"><path d="M1.5 15.5 L14.5 2.5 M5.5 15.5 L14.5 6.5 M9.5 15.5 L14.5 10.5" stroke="#fff" stroke-width="1.1"/><path d="M3 15.8 L14.6 4.2 M7 15.8 L14.6 8.2 M11 15.8 L14.6 12.2" stroke="#808080" stroke-width="2"/></svg>
<div class="a" style="left:465px;top:0;width:200px;height:440px;background:#c0c0c0;box-shadow:inset 1px 1px #dfdfdf,inset 2px 2px #fff"></div>
<div class="a" style="left:467px;top:2px;width:169px;height:18px;background:linear-gradient(to right,#808080,#b0b0b0)"></div>
<svg style="left:470px;top:4px" width="15" height="14" viewBox="0 -1 15 14" shape-rendering="crispEdges"><rect x="0" y="-1" width="15" height="14" fill="#000"/><rect x="0" y="0" width="15" height="12" fill="#fff"/><rect x="2" y="1" width="12" height="10" fill="#000"/><rect x="4" y="1" width="1" height="10" fill="#008000"/><rect x="7" y="1" width="1" height="10" fill="#008000"/><rect x="10" y="1" width="1" height="10" fill="#008000"/><rect x="2" y="4" width="12" height="1" fill="#008000"/><rect x="2" y="7" width="12" height="1" fill="#008000"/><rect x="4" y="5" width="1" height="1" fill="#c0ffc0"/><rect x="7" y="5" width="1" height="1" fill="#c0ffc0"/><rect x="10" y="5" width="1" height="1" fill="#c0ffc0"/><rect x="5" y="4" width="1" height="1" fill="#c0ffc0"/><rect x="6" y="4" width="1" height="1" fill="#c0ffc0"/><rect x="8" y="4" width="1" height="1" fill="#c0ffc0"/><rect x="9" y="4" width="1" height="1" fill="#c0ffc0"/></svg>
<div class="t" style="left:488px;top:5px;font-weight:bold;font-size:12px;letter-spacing:-0.3px;color:#c0c0c0">Control</div>
<div class="a rz" style="left:619px;top:4px;width:16px;height:14px"></div><svg style="left:619px;top:4px" width="16" height="14" viewBox="0 0 16 14"><path d="M4.5 3.5 L11.5 10.5 M11.5 3.5 L4.5 10.5" stroke="#000" stroke-width="1.6"/></svg>
<div class="t" style="left:474px;top:24px;font-size:11px;color:#808080;text-shadow:1px 1px #fff">File</div>
<div class="a" style="left:474px;top:35px;width:7px;height:1px;background:#808080;box-shadow:1px 1px #fff"></div>
<div class="t" style="left:503px;top:24px;font-size:11px;color:#808080;text-shadow:1px 1px #fff">Help</div>
<div class="a" style="left:503px;top:35px;width:9px;height:1px;background:#808080;box-shadow:1px 1px #fff"></div>
<div class="a et" style="left:468px;top:47px;width:80px;height:217px"></div><div class="gl" style="left:475px;top:41px;font-size:11px">Horizontal</div>
<div class="a et" style="left:557px;top:47px;width:79px;height:104px"></div><div class="gl" style="left:564px;top:41px;font-size:11px">TIME B</div>
<div class="a et" style="left:557px;top:159px;width:79px;height:104px"></div><div class="gl" style="left:564px;top:153px;font-size:11px">TIME A</div>
<div class="a et" style="left:468px;top:270px;width:168px;height:180px"></div><div class="gl" style="left:475px;top:264px;font-size:11px">Vertical</div>
<div class="a et" style="left:468px;top:295px;width:80px;height:150px"></div>
<div class="a et" style="left:557px;top:295px;width:79px;height:150px"></div>
<div class="t" style="left:468px;width:80px;text-align:center;top:57px;font-size:11px">MODE</div>
<div class="t" style="left:466px;width:80px;text-align:center;top:97px;font-size:14px;-webkit-text-stroke:0">Source</div>
<div class="t" style="left:466px;width:80px;text-align:center;top:138px;font-size:11px">Slope</div>
<div class="t" style="left:469px;width:80px;text-align:center;top:178px;font-size:11px">Couple</div>
<div class="a sk" style="left:476px;top:72px;width:65px;height:21px"></div><div class="t" style="left:480px;top:77px;font-size:11px;color:#000">AUTO</div><div class="a rz" style="left:523px;top:74px;width:16px;height:17px"></div><svg style="left:523px;top:74px" width="16" height="17" viewBox="0 0 16 17" shape-rendering="crispEdges"><g fill="#000"><rect x="5" y="7" width="7" height="1"/><rect x="6" y="8" width="5" height="1"/><rect x="7" y="9" width="3" height="1"/><rect x="8" y="10" width="1" height="1"/></g></svg>
<div class="a sk" style="left:476px;top:112px;width:65px;height:21px"></div><div class="t" style="left:480px;top:117px;font-size:11px;color:#000">CH1</div><div class="a rz" style="left:523px;top:114px;width:16px;height:17px"></div><svg style="left:523px;top:114px" width="16" height="17" viewBox="0 0 16 17" shape-rendering="crispEdges"><g fill="#000"><rect x="5" y="7" width="7" height="1"/><rect x="6" y="8" width="5" height="1"/><rect x="7" y="9" width="3" height="1"/><rect x="8" y="10" width="1" height="1"/></g></svg>
<div class="a sk" style="left:476px;top:152px;width:65px;height:21px"></div><div class="t" style="left:480px;top:157px;font-size:11px;color:#000">Positive</div><div class="a rz" style="left:523px;top:154px;width:16px;height:17px"></div><svg style="left:523px;top:154px" width="16" height="17" viewBox="0 0 16 17" shape-rendering="crispEdges"><g fill="#000"><rect x="5" y="7" width="7" height="1"/><rect x="6" y="8" width="5" height="1"/><rect x="7" y="9" width="3" height="1"/><rect x="8" y="10" width="1" height="1"/></g></svg>
<div class="a sk" style="left:476px;top:192px;width:65px;height:21px"></div><div class="t" style="left:480px;top:197px;font-size:11px;color:#000">AC</div><div class="a rz" style="left:523px;top:194px;width:16px;height:17px"></div><svg style="left:523px;top:194px" width="16" height="17" viewBox="0 0 16 17" shape-rendering="crispEdges"><g fill="#000"><rect x="5" y="7" width="7" height="1"/><rect x="6" y="8" width="5" height="1"/><rect x="7" y="9" width="3" height="1"/><rect x="8" y="10" width="1" height="1"/></g></svg>
<div class="a rz" style="left:476px;top:216px;width:65px;height:17px"></div><div class="t" style="left:476px;width:65px;text-align:center;top:219px;font-size:11px;letter-spacing:0.8px">STOP</div>
<div class="a rz" style="left:476px;top:240px;width:65px;height:17px"></div><div class="t" style="left:476px;width:65px;text-align:center;top:243px;font-size:11px">AUTO SET</div>
<div class="a sk" style="left:564px;top:56px;width:65px;height:21px"></div><div class="t" style="left:568px;top:61px;font-size:11px;color:#808080">0.2uS</div><div class="a rz" style="left:611px;top:58px;width:16px;height:17px"></div><svg style="left:611px;top:58px" width="16" height="17" viewBox="0 0 16 17" shape-rendering="crispEdges"><g fill="#fff"><rect x="6" y="8" width="7" height="1"/><rect x="7" y="9" width="5" height="1"/><rect x="8" y="10" width="3" height="1"/><rect x="9" y="11" width="1" height="1"/></g><g fill="#808080"><rect x="5" y="7" width="7" height="1"/><rect x="6" y="8" width="5" height="1"/><rect x="7" y="9" width="3" height="1"/><rect x="8" y="10" width="1" height="1"/></g></svg>
<div class="a sk" style="left:564px;top:168px;width:65px;height:21px"></div><div class="t" style="left:568px;top:173px;font-size:11px;color:#808080">5uS</div><div class="a rz" style="left:611px;top:170px;width:16px;height:17px"></div><svg style="left:611px;top:170px" width="16" height="17" viewBox="0 0 16 17" shape-rendering="crispEdges"><g fill="#fff"><rect x="6" y="8" width="7" height="1"/><rect x="7" y="9" width="5" height="1"/><rect x="8" y="10" width="3" height="1"/><rect x="9" y="11" width="1" height="1"/></g><g fill="#808080"><rect x="5" y="7" width="7" height="1"/><rect x="6" y="8" width="5" height="1"/><rect x="7" y="9" width="3" height="1"/><rect x="8" y="10" width="1" height="1"/></g></svg>
<div class="a sk" style="left:476px;top:344px;width:65px;height:21px"></div><div class="t" style="left:480px;top:349px;font-size:11px;color:#808080">10mV</div><div class="a rz" style="left:523px;top:346px;width:16px;height:17px"></div><svg style="left:523px;top:346px" width="16" height="17" viewBox="0 0 16 17" shape-rendering="crispEdges"><g fill="#fff"><rect x="6" y="8" width="7" height="1"/><rect x="7" y="9" width="5" height="1"/><rect x="8" y="10" width="3" height="1"/><rect x="9" y="11" width="1" height="1"/></g><g fill="#808080"><rect x="5" y="7" width="7" height="1"/><rect x="6" y="8" width="5" height="1"/><rect x="7" y="9" width="3" height="1"/><rect x="8" y="10" width="1" height="1"/></g></svg>
<div class="a sk" style="left:564px;top:344px;width:65px;height:21px"></div><div class="t" style="left:568px;top:349px;font-size:11px;color:#808080">5V</div><div class="a rz" style="left:611px;top:346px;width:16px;height:17px"></div><svg style="left:611px;top:346px" width="16" height="17" viewBox="0 0 16 17" shape-rendering="crispEdges"><g fill="#fff"><rect x="6" y="8" width="7" height="1"/><rect x="7" y="9" width="5" height="1"/><rect x="8" y="10" width="3" height="1"/><rect x="9" y="11" width="1" height="1"/></g><g fill="#808080"><rect x="5" y="7" width="7" height="1"/><rect x="6" y="8" width="5" height="1"/><rect x="7" y="9" width="3" height="1"/><rect x="8" y="10" width="1" height="1"/></g></svg>
<svg style="left:556px;top:72px" width="80" height="80" viewBox="-40 -40 80 80"><g transform="translate(0.5,0.5)"><path d="M-20.51 20.51 A29 29 0 1 1 20.51 20.51" stroke="#000" stroke-width="1" fill="none" shape-rendering="crispEdges"/><circle r="25.5" fill="#dfdfdf" shape-rendering="crispEdges"/><path d="M18.03 -18.03 A25.5 25.5 0 0 1 -18.03 18.03 Z" fill="#808080" shape-rendering="crispEdges"/><circle r="26" stroke="#000" stroke-width="1" fill="none" shape-rendering="crispEdges"/><path d="M-14.85 14.85 A21 21 0 0 1 14.85 -14.85 Z" fill="#fff"/><path d="M14.85 -14.85 A21 21 0 0 1 -14.85 14.85 Z" fill="#000"/><circle r="20.5" fill="#0000ff"/><path d="M-18.40 18.4 L-26.50 26.5" stroke="#000" stroke-width="1"/><path d="M18.40 18.4 L26.50 26.5" stroke="#000" stroke-width="1"/><path d="M9.96 0.87 L20.42 1.79" stroke="#fff" stroke-width="2.2"/></g></svg>
<svg style="left:556px;top:184px" width="80" height="80" viewBox="-40 -40 80 80"><g transform="translate(0.5,0.5)"><path d="M-20.51 20.51 A29 29 0 1 1 20.51 20.51" stroke="#000" stroke-width="1" fill="none" shape-rendering="crispEdges"/><circle r="25.5" fill="#dfdfdf" shape-rendering="crispEdges"/><path d="M18.03 -18.03 A25.5 25.5 0 0 1 -18.03 18.03 Z" fill="#808080" shape-rendering="crispEdges"/><circle r="26" stroke="#000" stroke-width="1" fill="none" shape-rendering="crispEdges"/><path d="M-14.85 14.85 A21 21 0 0 1 14.85 -14.85 Z" fill="#fff"/><path d="M14.85 -14.85 A21 21 0 0 1 -14.85 14.85 Z" fill="#000"/><circle r="20.5" fill="#0000ff"/><path d="M-18.40 18.4 L-26.50 26.5" stroke="#000" stroke-width="1"/><path d="M18.40 18.4 L26.50 26.5" stroke="#000" stroke-width="1"/><path d="M9.34 -3.58 L19.14 -7.35" stroke="#fff" stroke-width="2.2"/></g></svg>
<svg style="left:468px;top:360px" width="80" height="80" viewBox="-40 -40 80 80"><g transform="translate(0.5,0.5)"><path d="M-20.51 20.51 A29 29 0 1 1 20.51 20.51" stroke="#000" stroke-width="1" fill="none" shape-rendering="crispEdges"/><circle r="25.5" fill="#dfdfdf" shape-rendering="crispEdges"/><path d="M18.03 -18.03 A25.5 25.5 0 0 1 -18.03 18.03 Z" fill="#808080" shape-rendering="crispEdges"/><circle r="26" stroke="#000" stroke-width="1" fill="none" shape-rendering="crispEdges"/><path d="M-14.85 14.85 A21 21 0 0 1 14.85 -14.85 Z" fill="#fff"/><path d="M14.85 -14.85 A21 21 0 0 1 -14.85 14.85 Z" fill="#000"/><circle r="20.5" fill="#0000ff"/><path d="M-18.40 18.4 L-26.50 26.5" stroke="#000" stroke-width="1"/><path d="M18.40 18.4 L26.50 26.5" stroke="#000" stroke-width="1"/><path d="M7.66 6.43 L15.70 13.18" stroke="#fff" stroke-width="2.2"/></g></svg>
<svg style="left:556px;top:360px" width="80" height="80" viewBox="-40 -40 80 80"><g transform="translate(0.5,0.5)"><path d="M-20.51 20.51 A29 29 0 1 1 20.51 20.51" stroke="#000" stroke-width="1" fill="none" shape-rendering="crispEdges"/><circle r="25.5" fill="#dfdfdf" shape-rendering="crispEdges"/><path d="M18.03 -18.03 A25.5 25.5 0 0 1 -18.03 18.03 Z" fill="#808080" shape-rendering="crispEdges"/><circle r="26" stroke="#000" stroke-width="1" fill="none" shape-rendering="crispEdges"/><path d="M-14.85 14.85 A21 21 0 0 1 14.85 -14.85 Z" fill="#fff"/><path d="M14.85 -14.85 A21 21 0 0 1 -14.85 14.85 Z" fill="#000"/><circle r="20.5" fill="#0000ff"/><path d="M-18.40 18.4 L-26.50 26.5" stroke="#000" stroke-width="1"/><path d="M18.40 18.4 L26.50 26.5" stroke="#000" stroke-width="1"/><path d="M-7.99 6.02 L-16.37 12.34" stroke="#fff" stroke-width="2.2"/></g></svg>
<div class="a" style="left:476px;top:280px;width:152px;height:48px;background:#c0c0c0"></div>
<div class="a sk" style="left:476px;top:282px;width:13px;height:13px"></div><svg style="left:476px;top:282px" width="13" height="13" viewBox="0 0 13 13"><path d="M3 5 L5.5 7.5 L10 3 V6 L5.5 10.5 L3 8 Z" fill="#000"/></svg>
<div class="t" style="left:494px;top:283px;font-size:11px">CH.A</div>
<div class="a sk" style="left:532px;top:282px;width:13px;height:13px"></div>
<div class="t" style="left:550px;top:283px;font-size:11px">ADD</div>
<div class="a sk" style="left:532px;top:298px;width:13px;height:13px"></div>
<div class="t" style="left:550px;top:299px;font-size:11px">SUB</div>
<div class="a sk" style="left:532px;top:314px;width:13px;height:13px"></div>
<div class="t" style="left:550px;top:315px;font-size:11px">X-Y</div>
<div class="a sk" style="left:580px;top:282px;width:13px;height:13px"></div>
<div class="t" style="left:598px;top:283px;font-size:11px">CH.B</div>
<svg style="left:493px;top:296px" width="12" height="12" viewBox="0 0 12 12"><circle cx="6" cy="6" r="5" fill="#fff"/><path d="M9.89 2.11 A5.5 5.5 0 0 0 2.11 9.89" stroke="#808080" fill="none"/><path d="M9.18 2.82 A4.5 4.5 0 0 0 2.82 9.18" stroke="#000" fill="none"/><path d="M2.11 9.89 A5.5 5.5 0 0 0 9.89 2.11" stroke="#fff" fill="none"/><path d="M2.82 9.18 A4.5 4.5 0 0 0 9.18 2.82" stroke="#dfdfdf" fill="none"/></svg>
<div class="t" style="left:510px;top:297px;font-size:11px">DC</div>
<svg style="left:493px;top:312px" width="12" height="12" viewBox="0 0 12 12"><circle cx="6" cy="6" r="5" fill="#fff"/><path d="M9.89 2.11 A5.5 5.5 0 0 0 2.11 9.89" stroke="#808080" fill="none"/><path d="M9.18 2.82 A4.5 4.5 0 0 0 2.82 9.18" stroke="#000" fill="none"/><path d="M2.11 9.89 A5.5 5.5 0 0 0 9.89 2.11" stroke="#fff" fill="none"/><path d="M2.82 9.18 A4.5 4.5 0 0 0 9.18 2.82" stroke="#dfdfdf" fill="none"/><path d="M5 4 h2 v1 h1 v2 h-1 v1 h-2 v-1 h-1 v-2 h1 Z" fill="#000" shape-rendering="crispEdges"/></svg>
<div class="t" style="left:510px;top:313px;font-size:11px">AC</div>
<svg style="left:493px;top:328px" width="12" height="12" viewBox="0 0 12 12"><circle cx="6" cy="6" r="5" fill="#fff"/><path d="M9.89 2.11 A5.5 5.5 0 0 0 2.11 9.89" stroke="#808080" fill="none"/><path d="M9.18 2.82 A4.5 4.5 0 0 0 2.82 9.18" stroke="#000" fill="none"/><path d="M2.11 9.89 A5.5 5.5 0 0 0 9.89 2.11" stroke="#fff" fill="none"/><path d="M2.82 9.18 A4.5 4.5 0 0 0 9.18 2.82" stroke="#dfdfdf" fill="none"/></svg>
<div class="t" style="left:510px;top:329px;font-size:11px">GND</div>
<svg style="left:580px;top:298px" width="12" height="12" viewBox="0 0 12 12"><circle cx="6" cy="6" r="5" fill="#fff"/><path d="M9.89 2.11 A5.5 5.5 0 0 0 2.11 9.89" stroke="#808080" fill="none"/><path d="M9.18 2.82 A4.5 4.5 0 0 0 2.82 9.18" stroke="#000" fill="none"/><path d="M2.11 9.89 A5.5 5.5 0 0 0 9.89 2.11" stroke="#fff" fill="none"/><path d="M2.82 9.18 A4.5 4.5 0 0 0 9.18 2.82" stroke="#dfdfdf" fill="none"/></svg>
<div class="t" style="left:598px;top:299px;font-size:11px">DC</div>
<svg style="left:580px;top:314px" width="12" height="12" viewBox="0 0 12 12"><circle cx="6" cy="6" r="5" fill="#fff"/><path d="M9.89 2.11 A5.5 5.5 0 0 0 2.11 9.89" stroke="#808080" fill="none"/><path d="M9.18 2.82 A4.5 4.5 0 0 0 2.82 9.18" stroke="#000" fill="none"/><path d="M2.11 9.89 A5.5 5.5 0 0 0 9.89 2.11" stroke="#fff" fill="none"/><path d="M2.82 9.18 A4.5 4.5 0 0 0 9.18 2.82" stroke="#dfdfdf" fill="none"/><path d="M5 4 h2 v1 h1 v2 h-1 v1 h-2 v-1 h-1 v-2 h1 Z" fill="#000" shape-rendering="crispEdges"/></svg>
<div class="t" style="left:598px;top:315px;font-size:11px">AC</div>
<svg style="left:580px;top:330px" width="12" height="12" viewBox="0 0 12 12"><circle cx="6" cy="6" r="5" fill="#fff"/><path d="M9.89 2.11 A5.5 5.5 0 0 0 2.11 9.89" stroke="#808080" fill="none"/><path d="M9.18 2.82 A4.5 4.5 0 0 0 2.82 9.18" stroke="#000" fill="none"/><path d="M2.11 9.89 A5.5 5.5 0 0 0 9.89 2.11" stroke="#fff" fill="none"/><path d="M2.82 9.18 A4.5 4.5 0 0 0 9.18 2.82" stroke="#dfdfdf" fill="none"/></svg>
<div class="t" style="left:598px;top:331px;font-size:11px">GND</div>
</body></html>
